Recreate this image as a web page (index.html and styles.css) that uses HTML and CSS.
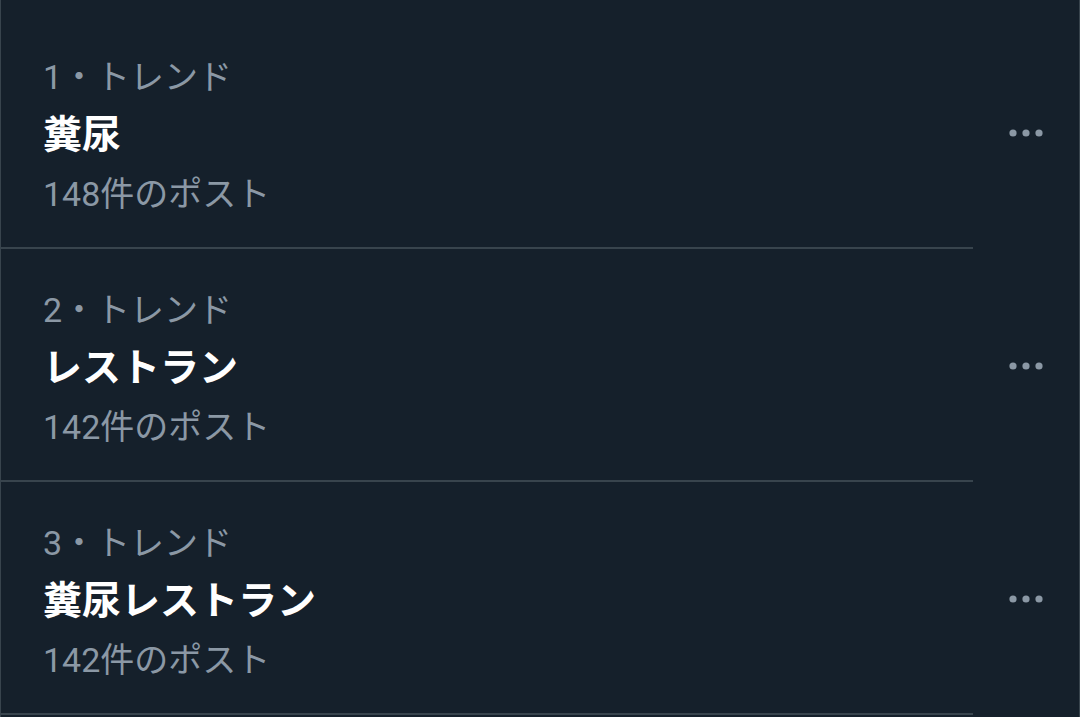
FILE: index.html
```html
<!DOCTYPE html>
<html lang="ja">
<head>
<meta charset="utf-8">
<title>トレンド</title>
<link rel="stylesheet" href="styles.css">
</head>
<body>
<div class="list">
  <div class="trend">
    <div class="trend-main">
      <div class="meta">1・トレンド</div>
      <div class="title">糞尿</div>
      <div class="meta">148件のポスト</div>
    </div>
    <div class="trend-more">
      <svg class="dots" width="36" height="8" viewBox="0 0 36 8"><circle cx="4" cy="4" r="3.6"/><circle cx="17" cy="4" r="3.6"/><circle cx="30" cy="4" r="3.6"/></svg>
    </div>
  </div>
  <div class="trend">
    <div class="trend-main">
      <div class="meta">2・トレンド</div>
      <div class="title">レストラン</div>
      <div class="meta">142件のポスト</div>
    </div>
    <div class="trend-more">
      <svg class="dots" width="36" height="8" viewBox="0 0 36 8"><circle cx="4" cy="4" r="3.6"/><circle cx="17" cy="4" r="3.6"/><circle cx="30" cy="4" r="3.6"/></svg>
    </div>
  </div>
  <div class="trend">
    <div class="trend-main">
      <div class="meta">3・トレンド</div>
      <div class="title">糞尿レストラン</div>
      <div class="meta">142件のポスト</div>
    </div>
    <div class="trend-more">
      <svg class="dots" width="36" height="8" viewBox="0 0 36 8"><circle cx="4" cy="4" r="3.6"/><circle cx="17" cy="4" r="3.6"/><circle cx="30" cy="4" r="3.6"/></svg>
    </div>
  </div>
</div>
</body>
</html>
```

FILE: styles.css
```css
html, body {
  margin: 0;
  padding: 0;
  background: #15202b;
  height: 100%;
}
body {
  font-family: Roboto, "Noto Sans CJK JP", sans-serif;
  overflow: hidden;
}
.list {
  box-sizing: border-box;
  min-height: 100%;
  border-left: 1px solid #38444d;
  border-right: 1px solid #38444d;
  padding-top: 16px;
}
.trend {
  display: flex;
}
.trend-main {
  width: 973px;
  box-sizing: border-box;
  margin-left: -1px;
  padding: 33px 0 25px 43px;
  border-bottom: 2px solid #38444d;
}
.meta {
  color: #8b98a5;
  font-size: 34px;
  line-height: 56px;
  height: 56px;
  white-space: nowrap;
}
.title {
  color: #ffffff;
  font-size: 39px;
  font-weight: 700;
  line-height: 61px;
  height: 61px;
  white-space: nowrap;
}
.trend-more {
  flex: 1;
  display: flex;
  align-items: center;
  padding-left: 36px;
  padding-top: 4px;
  padding-bottom: 4px;
}
.dots {
  fill: #8b98a5;
  display: block;
}
```
